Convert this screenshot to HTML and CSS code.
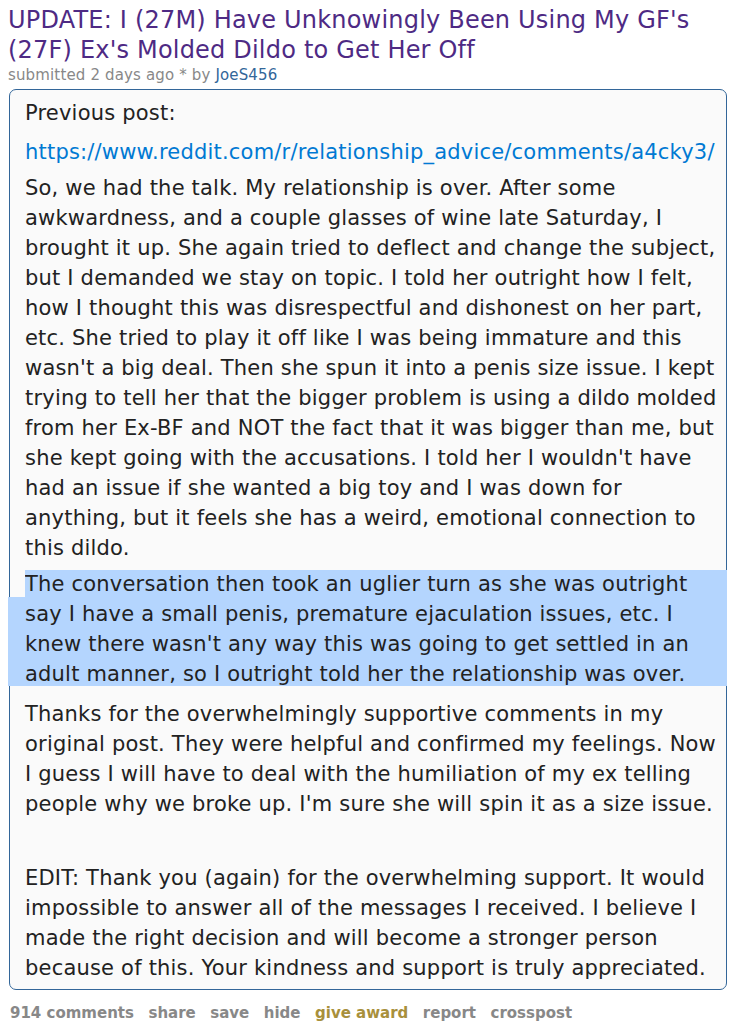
FILE: index.html
```html
<!DOCTYPE html>
<html>
<head>
<meta charset="utf-8">
<link rel="stylesheet" href="styles.css">
</head>
<body>
<div class="post">
  <h1 class="title">UPDATE: I (27M) Have Unknowingly Been Using My GF's<br>(27F) Ex's Molded Dildo to Get Her Off</h1>
  <p class="tagline">submitted 2 days ago * by <a class="author" href="#">JoeS456</a></p>
  <div class="usertext">
    <p class="intro">Previous post:</p>
    <p><a class="link" href="#">https://www.reddit.com/r/relationship_advice/comments/a4cky3/</a></p>
    <p>So, we had the talk. My relationship is over. After some<br>awkwardness, and a couple glasses of wine late Saturday, I<br>brought it up. She again tried to deflect and change the subject,<br>but I demanded we stay on topic. I told her outright how I felt,<br>how I thought this was disrespectful and dishonest on her part,<br>etc. She tried to play it off like I was being immature and this<br>wasn't a big deal. Then she spun it into a penis size issue. I kept<br>trying to tell her that the bigger problem is using a dildo molded<br>from her Ex-BF and NOT the fact that it was bigger than me, but<br>she kept going with the accusations. I told her I wouldn't have<br>had an issue if she wanted a big toy and I was down for<br>anything, but it feels she has a weird, emotional connection to<br>this dildo.</p>
    <p class="selected">The conversation then took an uglier turn as she was outright<br>say I have a small penis, premature ejaculation issues, etc. I<br>knew there wasn't any way this was going to get settled in an<br>adult manner, so I outright told her the relationship was over.</p>
    <p>Thanks for the overwhelmingly supportive comments in my<br>original post. They were helpful and confirmed my feelings. Now<br>I guess I will have to deal with the humiliation of my ex telling<br>people why we broke up. I'm sure she will spin it as a size issue.</p>
    <p class="blank">&nbsp;</p>
    <p>EDIT: Thank you (again) for the overwhelming support. It would<br>impossible to answer all of the messages I received. I believe I<br>made the right decision and will become a stronger person<br>because of this. Your kindness and support is truly appreciated.</p>
  </div>
  <ul class="buttons">
    <li>914 comments</li>
    <li>share</li>
    <li>save</li>
    <li>hide</li>
    <li class="award">give award</li>
    <li>report</li>
    <li>crosspost</li>
  </ul>
</div>
</body>
</html>
```

FILE: styles.css
```css
html, body {
  margin: 0;
  padding: 0;
  background: #ffffff;
}
body {
  font-family: "DejaVu Sans", Verdana, sans-serif;
  width: 732px;
  overflow: hidden;
}
.post {
  padding: 5px 5px 0 8px;
}
.title {
  margin: 0;
  font-size: 24px;
  letter-spacing: 0.2px;
  font-weight: normal;
  line-height: 30px;
  color: #4e2a84;
  white-space: nowrap;
}
.tagline {
  margin: 0;
  font-size: 15px;
  letter-spacing: 0.15px;
  line-height: 20px;
  color: #888888;
}
.author {
  color: #336699;
  text-decoration: none;
}
.usertext {
  margin: 4px 0 0 1px;
  border: 1px solid #336699;
  border-radius: 7px;
  background: #fafafa;
  padding: 8px 15px 6px 15px;
  font-size: 21px;
  letter-spacing: 0.2px;
  line-height: 30px;
  color: #222222;
  white-space: nowrap;
}
.usertext p {
  margin: 0 0 6px 0;
}
.usertext p.intro {
  margin-bottom: 9px;
}
.usertext p.blank {
  margin-bottom: 8px;
}
.usertext p:last-child {
  margin-bottom: 0;
}
.link {
  color: #0079d3;
  text-decoration: none;
}
.usertext p.selected {
  position: relative;
  margin: 0 -16px 10px -17px;
  padding-left: 17px;
  background: linear-gradient(#b4d5fe, #b4d5fe) 0 1px / 100% 116px no-repeat;
}
.selected::before {
  content: "";
  position: absolute;
  left: 0;
  top: 0;
  width: 17px;
  height: 28px;
  background: linear-gradient(to right, #ffffff 0 1px, #336699 1px 2px, #fafafa 2px);
}
.buttons {
  list-style: none;
  margin: 14px 0 0 2px;
  padding: 0;
  display: flex;
  gap: 14.5px;
  font-size: 15px;
  font-weight: bold;
  color: #888888;
}
.buttons .award {
  color: #a8903c;
}
```
